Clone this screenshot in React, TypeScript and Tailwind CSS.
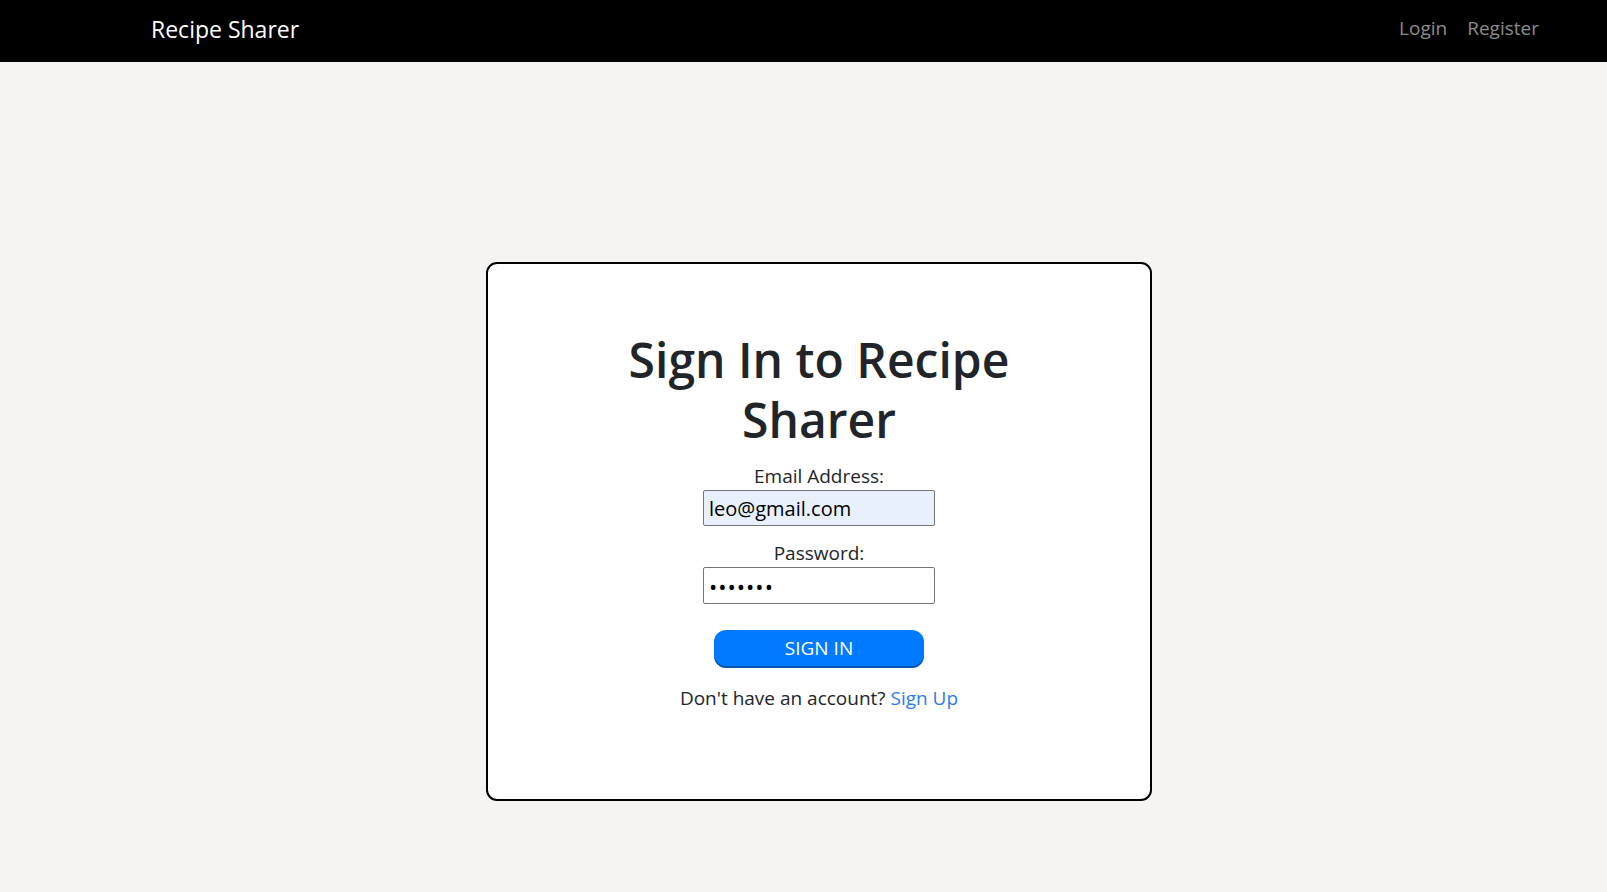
import { useState } from 'react';

const font = { fontFamily: '"Open Sans", "Noto Sans", sans-serif' };

function NavBar() {
  return (
    <nav className="h-[62px] bg-black flex items-center justify-between pl-[151px] pr-[68px]">
      <a href="#" className="text-white text-[23px] leading-none -mt-[4px]">
        Recipe Sharer
      </a>
      <div className="flex items-center gap-[20px] text-[19px] text-[#8c8c8c] -mt-[5px]">
        <a href="#">Login</a>
        <a href="#">Register</a>
      </div>
    </nav>
  );
}

function SignInCard() {
  const [email, setEmail] = useState('leo@gmail.com');
  const [password, setPassword] = useState('leo1234');

  return (
    <div className="w-[666px] h-[539px] bg-white border-2 border-black rounded-[11px] flex flex-col items-center pt-[66px]">
      <h1 className="text-[48px] leading-[60px] font-semibold text-[#212529] text-center">
        <span className="block">Sign In to Recipe</span>
        <span className="block">Sharer</span>
      </h1>
      <form className="flex flex-col items-center mt-[12px]" onSubmit={(e) => e.preventDefault()}>
        <label className="text-[19px] leading-[28px] text-[#212529]">Email Address:</label>
        <input
          type="email"
          value={email}
          onChange={(e) => setEmail(e.target.value)}
          className="w-[232px] h-[36px] px-[5px] text-[20px] text-black bg-[#e8f0fe] border border-[#767676] rounded-[2px] outline-none"
          style={font}
        />
        <label className="text-[19px] leading-[28px] text-[#212529] mt-[13px]">Password:</label>
        <input
          type="password"
          value={password}
          onChange={(e) => setPassword(e.target.value)}
          className="w-[232px] h-[37px] px-[5px] text-[22px] tracking-[1px] text-black bg-white border border-[#767676] rounded-[2px] outline-none"
          style={font}
        />
        <button
          type="submit"
          className="mt-[26px] w-[210px] h-[36px] bg-[#007bff] text-white text-[19px] rounded-[12px] shadow-[0_2px_0_#0056b3] leading-none"
        >
          SIGN IN
        </button>
        <p className="mt-[18px] text-[19px] text-[#212529]">
          Don't have an account?{' '}
          <a href="#" className="text-[#2b7de9]">
            Sign Up
          </a>
        </p>
      </form>
    </div>
  );
}

export default function App() {
  return (
    <div className="min-h-[892px] bg-[#f5f4f2]" style={font}>
      <NavBar />
      <main className="flex justify-center pl-[31px] pt-[200px] pb-[91px]">
        <SignInCard />
      </main>
    </div>
  );
}
